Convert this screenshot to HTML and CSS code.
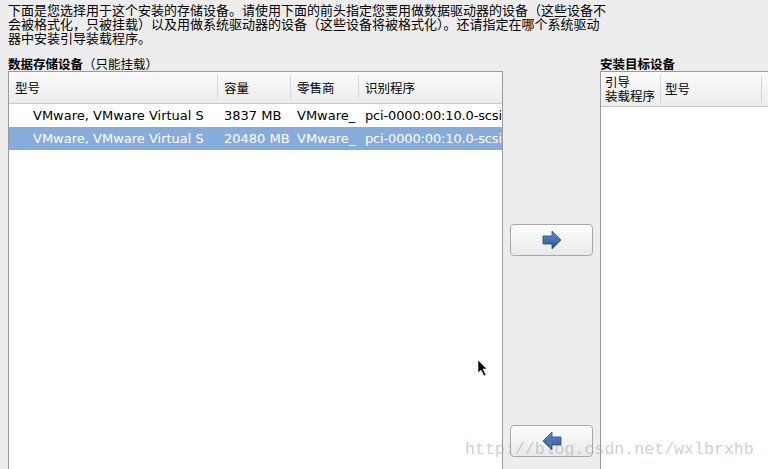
FILE: index.html
```html
<!DOCTYPE html>
<html lang="zh-CN">

<head>
    <meta charset="UTF-8">
    <meta name="viewport" content="width=device-width, initial-scale=1.0">
    <title>存储设备</title>
    <link rel="stylesheet" href="styles.css">
</head>

<body>
    <!-- Intro text -->
    <p class="intro">下面是您选择用于这个安装的存储设备。请使用下面的前头指定您要用做数据驱动器的设备（这些设备不会被格式化，只被挂载）以及用做系统驱动器的设备（这些设备将被格式化）。还请指定在哪个系统驱动器中安装引导装载程序。</p>

    <div class="main">
        <!-- Data storage devices -->
        <div class="left-col">
            <h2 class="title">数据存储设备<span>（只能挂载）</span></h2>
            <div class="table-box">
                <div class="thead">
                    <div class="c1">型号</div>
                    <div class="c2">容量</div>
                    <div class="c3">零售商</div>
                    <div class="c4">识别程序</div>
                </div>
                <div class="row">
                    <div class="c1 model">VMware, VMware Virtual S</div>
                    <div class="c2">3837 MB</div>
                    <div class="c3">VMware_</div>
                    <div class="c4">pci-0000:00:10.0-scsi</div>
                </div>
                <div class="row selected">
                    <div class="c1 model">VMware, VMware Virtual S</div>
                    <div class="c2">20480 MB</div>
                    <div class="c3">VMware_</div>
                    <div class="c4">pci-0000:00:10.0-scsi</div>
                </div>
            </div>
        </div>

        <!-- Move buttons -->
        <div class="mid-col">
            <button class="move-btn btn-add">
                <svg width="20" height="18" viewBox="0 0 20 18">
                    <defs>
                        <linearGradient id="ga" x1="0" y1="0" x2="0" y2="1">
                            <stop offset="0" stop-color="#6592d0" />
                            <stop offset="1" stop-color="#24518f" />
                        </linearGradient>
                    </defs>
                    <polygon points="1,5 10,5 10,0 19,9 10,18 10,13 1,13" fill="url(#ga)" stroke="#264a80" stroke-width="0.8" />
                </svg>
            </button>
            <button class="move-btn btn-remove">
                <svg width="20" height="18" viewBox="0 0 20 18">
                    <defs>
                        <linearGradient id="gb" x1="0" y1="0" x2="0" y2="1">
                            <stop offset="0" stop-color="#6592d0" />
                            <stop offset="1" stop-color="#24518f" />
                        </linearGradient>
                    </defs>
                    <polygon points="19,5 10,5 10,0 1,9 10,18 10,13 19,13" fill="url(#gb)" stroke="#264a80" stroke-width="0.8" />
                </svg>
            </button>
        </div>

        <!-- Install target devices -->
        <div class="right-col">
            <h2 class="title">安装目标设备</h2>
            <div class="table-box right-box">
                <div class="thead">
                    <div class="r1">引导<br>装载程序</div>
                    <div class="r2">型号</div>
                    <div class="r3"></div>
                </div>
            </div>
        </div>
    </div>

    <!-- Mouse pointer -->
    <svg class="pointer" width="12" height="18" viewBox="0 0 12 18">
        <polygon points="1,1 1,14 4,11 7,17 9,16 6,10 10,10" fill="#000" stroke="#fff" stroke-width="0.6" />
    </svg>

    <div class="watermark">http://blog.csdn.net/wxlbrxhb</div>
</body>

</html>
```

FILE: styles.css
```css
* {
    box-sizing: border-box;
    margin: 0;
    padding: 0;
}

body {
    font-family: "DejaVu Sans", "Noto Sans CJK SC", sans-serif;
    font-size: 13px;
    color: #000;
    background-color: #ededed;
    width: 768px;
    height: 469px;
    overflow: hidden;
    position: relative;
}

.intro {
    font-family: "Noto Sans CJK SC", sans-serif;
    font-size: 13px;
    line-height: 14px;
    padding: 3px 8px 0;
    width: 617px;
}

.main {
    display: flex;
    margin-top: 12px;
}

.title {
    font-family: "Noto Sans CJK SC", sans-serif;
    font-size: 12.5px;
    font-weight: bold;
    line-height: 14px;
    height: 14px;
}

.title span {
    font-weight: normal;
}

.left-col {
    width: 503px;
    padding-left: 8px;
}

.table-box {
    background: #fff;
    border: 1px solid #9a9a9a;
    height: 420px;
}

.thead {
    display: flex;
    height: 32px;
    background: linear-gradient(#fbfbfb, #ececec);
    border-bottom: 1px solid #c8c8c8;
    font-family: "Noto Sans CJK SC", sans-serif;
    font-size: 12.5px;
}

.thead > div {
    display: flex;
    align-items: center;
    border-right: 1px solid #d6d6d6;
    margin: 3px 0;
    padding-left: 6px;
}

.row {
    display: flex;
    height: 23px;
    align-items: center;
    white-space: nowrap;
}

.row > div {
    overflow: hidden;
    padding-left: 6px;
}

.c1 {
    width: 209px;
}

.row .model {
    padding-left: 24px;
}

.c2 {
    width: 73px;
}

.c3 {
    width: 68px;
}

.c4 {
    flex: 1;
}

.row .c4 {
    letter-spacing: -0.15px;
}

.thead .c4 {
    border-right: none;
}

.selected {
    background-color: #87abda;
    color: #fff;
}

.mid-col {
    width: 97px;
    padding-top: 167px;
    display: flex;
    flex-direction: column;
    align-items: center;
}

.move-btn {
    width: 83px;
    height: 32px;
    border: 1px solid #a8a8a8;
    border-radius: 4px;
    background: linear-gradient(#fdfdfd, #e9e9e9);
    display: flex;
    align-items: center;
    justify-content: center;
}

.btn-remove {
    margin-top: 169px;
}

.right-col {
    flex: 1;
}

.right-box {
    margin-right: -10px;
}

.right-box .thead {
    height: 35px;
}

.right-box .thead > div {
    padding-left: 4px;
    line-height: 14px;
}

.r1 {
    width: 60px;
}

.r2 {
    width: 101px;
    padding-left: 6px;
}

.r3 {
    flex: 1;
}

.pointer {
    position: absolute;
    left: 477px;
    top: 359px;
}

.watermark {
    position: absolute;
    left: 465px;
    top: 440px;
    font-family: "Liberation Mono", monospace;
    font-size: 16.6px;
    color: rgba(160, 160, 160, 0.5);
    white-space: nowrap;
}
```
